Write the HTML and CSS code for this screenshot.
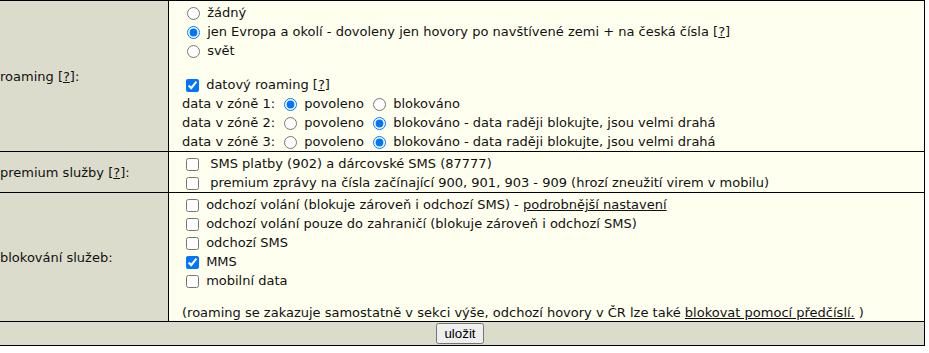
FILE: index.html
```html
<!DOCTYPE html>
<html lang="cs">
<head>
    <meta charset="UTF-8">
    <title>Nastavení služeb</title>
    <link rel="stylesheet" href="styles.css">
</head>
<body>
    <form class="formular">
    <table class="nastaveni">
        <!-- roaming -->
        <tr class="r-roaming">
            <td class="popis">roaming [<a href="#">?</a>]:</td>
            <td class="volby">
                <div class="radek"><input type="radio" name="roaming"> žádný</div>
                <div class="radek"><input type="radio" name="roaming" checked> jen Evropa a okolí - dovoleny jen hovory po navštívené zemi + na česká čísla [<a href="#">?</a>]</div>
                <div class="radek"><input type="radio" name="roaming"> svět</div>
                <div class="mezera"></div>
                <div class="radek"><input type="checkbox" checked> datový roaming [<a href="#">?</a>]</div>
                <div class="radek">data v zóně 1: <input type="radio" name="z1" checked> povoleno <input type="radio" name="z1"> blokováno</div>
                <div class="radek">data v zóně 2: <input type="radio" name="z2"> povoleno <input type="radio" name="z2" checked> blokováno - data raději blokujte, jsou velmi drahá</div>
                <div class="radek">data v zóně 3: <input type="radio" name="z3"> povoleno <input type="radio" name="z3" checked> blokováno - data raději blokujte, jsou velmi drahá</div>
            </td>
        </tr>

        <!-- premium -->
        <tr class="r-premium">
            <td class="popis">premium služby [<a href="#">?</a>]:</td>
            <td class="volby">
                <div class="radek"><input type="checkbox">&nbsp; SMS platby (902) a dárcovské SMS (87777)</div>
                <div class="radek"><input type="checkbox">&nbsp; premium zprávy na čísla začínající 900, 901, 903 - 909 (hrozí zneužití virem v mobilu)</div>
            </td>
        </tr>

        <!-- blokovani -->
        <tr class="r-blokovani">
            <td class="popis">blokování služeb:</td>
            <td class="volby">
                <div class="radek"><input type="checkbox"> odchozí volání (blokuje zároveň i odchozí SMS) - <a href="#">podrobnější nastavení</a></div>
                <div class="radek"><input type="checkbox"> odchozí volání pouze do zahraničí (blokuje zároveň i odchozí SMS)</div>
                <div class="radek"><input type="checkbox"> odchozí SMS</div>
                <div class="radek"><input type="checkbox" checked> MMS</div>
                <div class="radek"><input type="checkbox"> mobilní data</div>
                <div class="mezera-mala"></div>
                <div class="poznamka">(roaming se zakazuje samostatně v sekci výše, odchozí hovory v ČR lze také <a href="#">blokovat pomocí předčíslí.</a> )</div>
            </td>
        </tr>

        <tr class="r-ulozit">
            <td colspan="2" class="ulozit"><button type="button">uložit</button></td>
        </tr>
    </table>
    </form>
</body>
</html>
```

FILE: styles.css
```css
/* Obecne */
body {
    margin: 0;
    padding: 0;
    background-color: #fff;
    font-family: "DejaVu Sans", Verdana, sans-serif;
    font-size: 13px;
    color: #111;
}
a {
    color: #111;
    text-decoration: underline;
}

/* Tabulka nastaveni */
.nastaveni {
    border-collapse: collapse;
    margin-left: -5px;
    width: 930px;
}
.nastaveni td {
    border: 1px solid #000;
    padding: 0;
}
.popis {
    width: 168px;
    padding-left: 4px !important;
    background-color: #dcdccc;
    vertical-align: middle;
}
.volby {
    background-color: #fffff0;
    padding-left: 13px !important;
    vertical-align: top;
}
.r-roaming .volby {
    padding-top: 2px !important;
}
.r-premium .volby {
    padding-top: 2px !important;
}
.r-blokovani .volby {
    padding-top: 2px !important;
}
.radek {
    height: 19px;
    line-height: 19px;
    white-space: nowrap;
}
.mezera {
    height: 15px;
}
.mezera-mala {
    height: 15px;
}
.poznamka {
    height: 16px;
    line-height: 16px;
}
input[type="radio"] {
    margin: 0 3px 0 5px;
    vertical-align: middle;
}
input[type="checkbox"] {
    margin: 0 3px 0 4px;
    vertical-align: middle;
}

/* Tlacitko */
.ulozit {
    background-color: #dcdccc;
    text-align: center;
    height: 23px;
}
.ulozit button {
    font-family: "Liberation Sans", Arial, sans-serif;
    font-size: 13.33px;
}
```
